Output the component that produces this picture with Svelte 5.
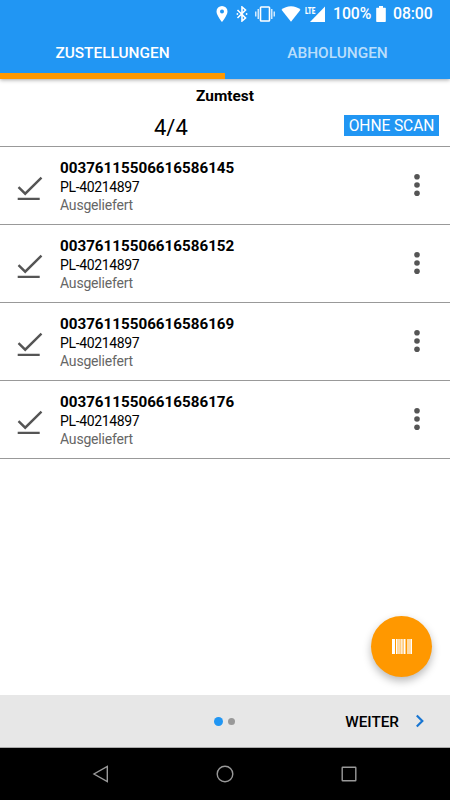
<script lang="ts">
	let active_tab = $state('deliveries');
	let page = $state(0);

	const tabs = [
		{ id: 'deliveries', label: 'ZUSTELLUNGEN' },
		{ id: 'pickups', label: 'ABHOLUNGEN' },
	];

	const parcels = [
		{ code: '00376115506616586145', order: 'PL-40214897', status: 'Ausgeliefert' },
		{ code: '00376115506616586152', order: 'PL-40214897', status: 'Ausgeliefert' },
		{ code: '00376115506616586169', order: 'PL-40214897', status: 'Ausgeliefert' },
		{ code: '00376115506616586176', order: 'PL-40214897', status: 'Ausgeliefert' },
	];
</script>

<div class="screen">
	<header class="app-bar">
		<div class="status-bar">
			<svg class="pin" width="12" height="16" viewBox="0 0 12 16">
				<path fill-rule="evenodd" d="M6 0a5.5 5.5 0 0 0-5.5 5.5C.5 9.6 6 16 6 16s5.500-6.400 5.500-10.500A5.500 5.500 0 0 0 6 0zm0 3.500a2 2 0 1 1 0 4 2 2 0 0 1 0-4z" />
			</svg>
			<svg class="bluetooth" width="12" height="16" viewBox="0 0 12 16">
				<path class="line" d="M1.500 4l8 8L6 15V1l3.500 3-8 8" />
				<circle cx="1.400" cy="8" r=".9" />
				<circle cx="10.600" cy="8" r=".9" />
			</svg>
			<svg class="vibrate" width="20" height="16" viewBox="0 0 20 16">
				<rect class="line" x="5.500" y="1" width="9" height="14" rx=".7" />
				<path class="thin" d="M3.200 3v10M.8 5.500v5M16.800 3v10M19.200 5.500v5" />
			</svg>
			<svg class="wifi" width="20" height="16" viewBox="0 0 20 16">
				<path d="M10 15.800L.5 3.800C3 1.500 6.300.2 10 .2s7 1.300 9.500 3.600z" />
			</svg>
			<div class="signal">
				<span>LTE</span>
				<svg width="15" height="16" viewBox="0 0 15 16">
					<path d="M15 .5V16H0z" />
				</svg>
			</div>
			<span class="percent">100%</span>
			<svg class="battery" width="10" height="16" viewBox="0 0 10 16">
				<path d="M3 0h4v1.700h2.200q.6 0 .6.6v13q0 .7-.7.7H.9q-.7 0-.7-.7v-13q0-.6.6-.6H3z" />
			</svg>
			<span class="clock">08:00</span>
		</div>

		<nav class="tabs">
			{#each tabs as tab}
				<button class="tab" class:active={active_tab === tab.id} onclick={() => (active_tab = tab.id)}>
					{tab.label}
				</button>
			{/each}
		</nav>
	</header>

	<section class="summary">
		<h1>Zumtest</h1>
		<div class="summary-row">
			<span class="count">4/4</span>
			<button class="no-scan">OHNE SCAN</button>
		</div>
	</section>

	<main class="list">
		{#each parcels as parcel}
			<article class="parcel">
				<svg class="check" width="28" height="28" viewBox="0 0 28 28">
					<path d="M2.500 15.200l6.700 6.500L25.500 5.600M1.700 27h22" />
				</svg>
				<div class="info">
					<strong>{parcel.code}</strong>
					<span class="order">{parcel.order}</span>
					<span class="state">{parcel.status}</span>
				</div>
				<button class="more" aria-label="Mehr">
					<svg width="8" height="24" viewBox="0 0 8 24">
						<circle cx="4" cy="3.700" r="2.800" />
						<circle cx="4" cy="12" r="2.800" />
						<circle cx="4" cy="20.300" r="2.800" />
					</svg>
				</button>
			</article>
		{/each}
	</main>

	<button class="fab" aria-label="Scannen">
		<svg width="20" height="15" viewBox="0 0 20 15">
			<path d="M0 0h3v15H0zM4 0h1.200v15H4zM9.200 0h1v15h-1zM11.500 0h2v15h-2zM18.500 0H20v15h-1.500z" />
			<path class="faint" d="M5.200 0h3.600v15H5.200zM10.200 0h.8v15h-.8zM15 0h3.500v15H15z" />
		</svg>
	</button>

	<footer class="pager">
		<div class="dots">
			{#each [0, 1] as dot}
				<span class="dot" class:current={page === dot}></span>
			{/each}
		</div>
		<button class="next" onclick={() => (page = 1)}>
			<span>WEITER</span>
			<svg width="10" height="14" viewBox="0 0 10 14">
				<path d="M1.800 1.500L7.300 7l-5.500 5.500" />
			</svg>
		</button>
	</footer>

	<div class="nav-bar">
		<svg width="18" height="18" viewBox="0 0 18 18"><path d="M15.300 1.500v15L2 9z" /></svg>
		<svg width="18" height="18" viewBox="0 0 18 18"><circle cx="9" cy="9" r="7.800" /></svg>
		<svg width="18" height="18" viewBox="0 0 18 18"><rect x="2.200" y="2.200" width="13.600" height="13.600" rx=".5" /></svg>
	</div>
</div>

<style>
	:global(body) {
		margin: 0;
	}

	.screen {
		position: relative;
		display: flex;
		flex-direction: column;
		width: 450px;
		height: 800px;
		overflow: hidden;
		background: #fff;
		color: #000;
		font-family: Roboto, 'Liberation Sans', sans-serif;
	}

	button {
		border: none;
		padding: 0;
		background: none;
		color: inherit;
		font: inherit;
		cursor: pointer;
	}

	svg {
		display: block;
		flex-shrink: 0;
	}

	.app-bar {
		position: relative;
		height: 79px;
		background: #2196f3;
		box-shadow: 0 1px 4px rgba(0, 0, 0, 0.35);
	}

	.status-bar {
		display: flex;
		align-items: center;
		height: 27px;
		padding-left: 216px;
		color: #fff;
		fill: #fff;
		font-size: 15.8px;
		font-weight: 500;
		line-height: 27px;
	}

	.line,
	.thin {
		fill: none;
		stroke: #fff;
		stroke-width: 1.6;
	}

	.thin {
		stroke-width: 1.2;
	}

	.bluetooth {
		margin-left: 8px;
	}

	.vibrate {
		margin-left: 7px;
	}

	.wifi {
		margin-left: 6px;
	}

	.signal {
		display: flex;
		width: 20px;
		margin-left: 4px;

		span {
			width: 5px;
			font-size: 9.5px;
			font-weight: 900;
			line-height: 9px;
			transform: scaleX(0.66);
			transform-origin: left;
		}
	}

	.percent {
		width: 43px;
		padding-left: 8px;
		box-sizing: border-box;
		letter-spacing: -0.1px;
	}

	.battery {
		margin-left: 8px;
	}

	.clock {
		margin-left: 7px;
		letter-spacing: -0.1px;
	}

	.tabs {
		display: flex;
		height: 52px;
	}

	.tab {
		flex: 1;
		border-top: 6px solid transparent;
		border-bottom: 6px solid transparent;
		color: rgba(255, 255, 255, 0.7);
		font-size: 15.4px;
		font-weight: 500;

		&.active {
			border-bottom-color: #ff9800;
			color: #fff;
		}
	}

	.summary {
		height: 67px;
		border-bottom: 1px solid #999;

		h1 {
			margin: 0;
			padding-top: 7px;
			font-size: 15.4px;
			font-weight: 700;
			line-height: 20px;
			text-align: center;
		}
	}

	.summary-row {
		display: flex;
		align-items: center;
		justify-content: space-between;
		padding: 9px 11px 0 154px;
	}

	.count {
		padding-top: 2px;
		font-size: 22px;
		line-height: 22px;
	}

	.no-scan {
		width: 95px;
		height: 21px;
		margin-top: -3px;
		padding-top: 1px;
		background: #2196f3;
		color: #fff;
		font-size: 15.6px;
		line-height: 20px;
		letter-spacing: -0.1px;
	}

	.list {
		flex: 1;
	}

	.parcel {
		display: flex;
		height: 77px;
		padding: 0 29px 0 16px;
		border-bottom: 1px solid #999;
	}

	.check {
		margin-top: 25px;
		fill: none;
		stroke: #555;
		stroke-width: 2.4;
	}

	.info {
		display: flex;
		flex: 1;
		flex-direction: column;
		padding: 11px 0 0 16px;
		font-size: 14px;
		line-height: 18px;

		strong {
			font-size: 15.2px;
			line-height: 20px;
		}
	}

	.order {
		letter-spacing: -0.35px;
	}

	.state {
		color: #666;
		letter-spacing: -0.2px;
	}

	.more {
		align-self: flex-start;
		margin-top: 26px;
		fill: #555;
	}

	.fab {
		position: absolute;
		left: 371px;
		top: 616px;
		display: flex;
		align-items: center;
		justify-content: center;
		width: 61px;
		height: 61px;
		border-radius: 50%;
		background: #ff9800;
		box-shadow: 0 4px 9px rgba(0, 0, 0, 0.28);
		fill: #fff;
	}

	.faint {
		opacity: 0.65;
	}

	.pager {
		display: flex;
		align-items: center;
		justify-content: space-between;
		height: 52px;
		padding: 0 25px 0 214px;
		border-bottom: 1px solid #aaa;
		background: #e7e7e7;
	}

	.dots {
		display: flex;
		align-items: center;
		gap: 5px;
	}

	.dot {
		width: 7px;
		height: 7px;
		border-radius: 50%;
		background: #999;

		&.current {
			width: 9px;
			height: 9px;
			background: #2196f3;
		}
	}

	.next {
		display: flex;
		align-items: center;
		gap: 16px;
		font-size: 15.3px;
		font-weight: 500;

		span {
			padding-top: 1px;
		}

		svg {
			fill: none;
			stroke: #1976d2;
			stroke-width: 2.2;
		}
	}

	.nav-bar {
		display: flex;
		align-items: center;
		justify-content: space-between;
		height: 52px;
		padding: 0 92px;
		background: #000;
		fill: none;
		stroke: #999;
		stroke-width: 1.4;
	}
</style>
